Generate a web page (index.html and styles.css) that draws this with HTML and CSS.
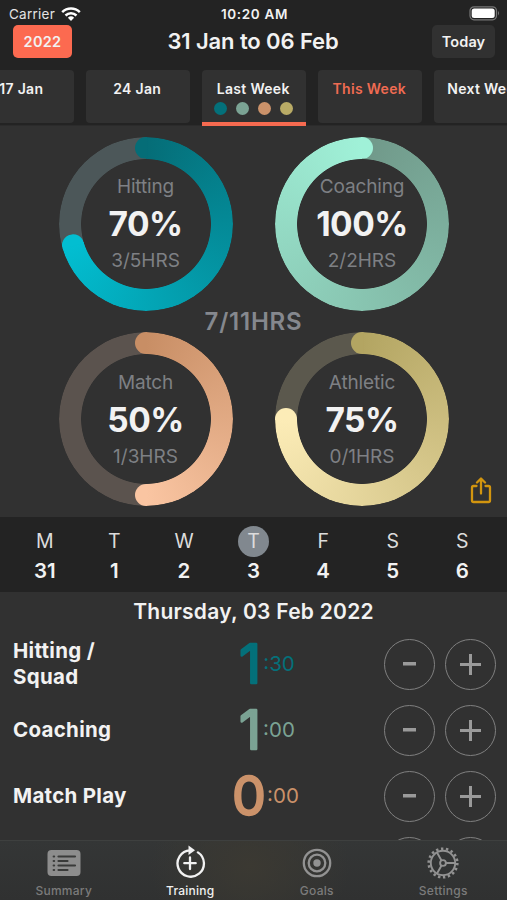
FILE: index.html
```html
<!DOCTYPE html>
<html lang="en">
<head>
<meta charset="utf-8">
<meta name="viewport" content="width=device-width, initial-scale=1">
<title>Training</title>
<link rel="stylesheet" href="styles.css">
</head>
<body>
<div class="app">
  <header class="top">
    <div class="status">
      <div class="carrier"><span>Carrier</span>
        <svg width="20" height="14" viewBox="0 0 20 14" fill="none" stroke="#fff" stroke-width="2.5"><path d="M1.2 5.2a12.6 12.6 0 0 1 17.6 0M4.5 8.5a8 8 0 0 1 11 0"/><path d="M10 14 6.9 10.7a4.5 4.5 0 0 1 6.2 0z" fill="#fff" stroke="none"/></svg>
      </div>
      <div class="clock">10:20 AM</div>
      <svg class="battery" width="31" height="15" viewBox="0 0 31 15"><rect x="1" y=".8" width="26.5" height="13" rx="4" fill="#222" stroke="#777" stroke-width="1.2"/><rect x="2.7" y="2.5" width="23" height="9.6" rx="2.5" fill="#fff"/><path d="M29 5q2 2.2 0 4.5z" fill="#777"/></svg>
    </div>
    <div class="title-row">
      <button class="btn year">2022</button>
      <h1>31 Jan to 06 Feb</h1>
      <button class="btn today">Today</button>
    </div>
    <nav class="weeks">
      <div class="week">17 Jan</div>
      <div class="week">24 Jan</div>
      <div class="week selected">Last Week
        <div class="dots"><i class="hitting"></i><i class="coaching"></i><i class="match"></i><i class="athletic"></i></div>
      </div>
      <div class="week current">This Week</div>
      <div class="week">Next Week</div>
    </nav>
  </header>

  <section class="rings">
    <div class="ring r-hitting"><div class="arc"></div><b class="cap start"></b><b class="cap end"></b>
      <div class="label">Hitting</div><div class="pct">70%</div><div class="hrs">3/5HRS</div></div>
    <div class="ring r-coaching"><div class="arc"></div><b class="cap end"></b>
      <div class="label">Coaching</div><div class="pct">100%</div><div class="hrs">2/2HRS</div></div>
    <div class="ring r-match"><div class="arc"></div><b class="cap start"></b><b class="cap end"></b>
      <div class="label">Match</div><div class="pct">50%</div><div class="hrs">1/3HRS</div></div>
    <div class="ring r-athletic"><div class="arc"></div><b class="cap start"></b><b class="cap end"></b>
      <div class="label">Athletic</div><div class="pct">75%</div><div class="hrs">0/1HRS</div></div>
    <div class="total">7/11HRS</div>
    <svg class="share" width="22" height="27" viewBox="0 0 22 27" fill="none" stroke="#d2950f" stroke-width="2.300" stroke-linecap="round" stroke-linejoin="round"><path d="M6.500 9H3.600Q2 9 2 10.600V23.400Q2 25 3.600 25H18.400Q20 25 20 23.400V10.600Q20 9 18.400 9H15.500M11 16.500V2M7 5.500 11 1.500 15 5.500"/></svg>
  </section>

  <section class="days">
    <div class="day"><span>M</span><strong>31</strong></div>
    <div class="day"><span>T</span><strong>1</strong></div>
    <div class="day"><span>W</span><strong>2</strong></div>
    <div class="day active"><span>T</span><strong>3</strong></div>
    <div class="day"><span>F</span><strong>4</strong></div>
    <div class="day"><span>S</span><strong>5</strong></div>
    <div class="day"><span>S</span><strong>6</strong></div>
  </section>

  <section class="log">
    <h2>Thursday, 03 Feb 2022</h2>
    <div class="row"><div class="name">Hitting /<br>Squad</div><div class="time t-hitting"><svg width="26" height="46" viewBox="0 0 26 46"><text x="13" y="41.500" text-anchor="middle">1</text></svg><small>:30</small></div>
      <button class="step minus"></button><button class="step plus"></button></div>
    <div class="row"><div class="name">Coaching</div><div class="time t-coaching"><svg width="26" height="46" viewBox="0 0 26 46"><text x="13" y="41.500" text-anchor="middle">1</text></svg><small>:00</small></div>
      <button class="step minus"></button><button class="step plus"></button></div>
    <div class="row"><div class="name">Match Play</div><div class="time t-match"><svg width="34" height="46" viewBox="0 0 34 46"><text x="16" y="41.500" text-anchor="middle">0</text></svg><small>:00</small></div>
      <button class="step minus"></button><button class="step plus"></button></div>
    <div class="row"><div class="name"></div><div class="time"></div>
      <button class="step minus"></button><button class="step plus"></button></div>
  </section>

  <nav class="tabbar">
    <a class="tab"><svg width="34" height="34" viewBox="0 0 34 34"><rect x=".5" y="5" width="33" height="26" rx="4" fill="#8d8d8d"/><g stroke="#3a3b3a" stroke-width="2.200" stroke-linecap="round"><path d="M11.500 11.500H28M11.500 16H20.500M11.500 20.500H28M11.500 25H20.500"/><path d="M6.700 11.500h.4M6.700 16h.4M6.700 20.500h.4M6.700 25h.4"/></g></svg><span>Summary</span></a>
    <a class="tab on"><svg width="34" height="34" viewBox="0 0 34 34" fill="none" stroke="#f2f2f2" stroke-width="2.300" stroke-linecap="round"><path d="M24.900 7.400A13.200 13.200 0 1 1 17 5.300M17 12.500V24M11.300 18.200H22.700"/><path d="M15.500 .5 22 5.200 15.500 9.900z" fill="#f2f2f2" stroke="none"/></svg><span>Training</span></a>
    <a class="tab"><svg width="34" height="34" viewBox="0 0 34 34" fill="none" stroke="#929292" stroke-width="2.300"><circle cx="17" cy="18" r="13.200"/><circle cx="17" cy="18" r="8.300"/><circle cx="17" cy="18" r="3.700" fill="#929292" stroke="none"/></svg><span>Goals</span></a>
    <a class="tab"><svg width="34" height="34" viewBox="0 0 34 34" fill="none" stroke="#929292" stroke-width="1.900"><circle cx="17" cy="18" r="14.300" stroke-width="2.600" stroke-dasharray="2.400 2.592"/><circle cx="17" cy="18" r="12.200"/><circle cx="17" cy="18" r="2.900"/><path d="M20 18H29M15.500 15.500 11 7.500M15.500 20.500 11 28.500"/></svg><span>Settings</span></a>
  </nav>
</div>
</body>
</html>
```
FILE: styles.css
```css
* { box-sizing: border-box; margin: 0; padding: 0; }
body { width: 507px; height: 900px; overflow: hidden; background: #313131; color: #f2f2f2; font-family: Inter, "Liberation Sans", sans-serif; }
button { border: 0; font-family: inherit; color: inherit; }
.app { height: 900px; display: flex; flex-direction: column; position: relative; overflow: hidden; }

.top { height: 126px; background: #232323; flex: none; border-bottom: 1px solid #2b2b2b; }
.status { height: 25px; display: grid; grid-template-columns: 1fr auto 1fr; align-items: center; padding: 3px 7px 0 9px; font-size: 13.5px; line-height: 22px; }
.carrier { display: flex; align-items: center; gap: 6px; letter-spacing: .25px; color: #e4e4e4; }
.clock { font-weight: 600; font-size: 13.500px; letter-spacing: .65px; }
.battery { justify-self: end; margin-top: -1px; }
.title-row { height: 45px; display: flex; justify-content: space-between; align-items: flex-start; padding: 0 12px 0 13px; }
h1 { font-size: 22px; font-weight: 600; line-height: 33px; letter-spacing: -.1px; margin-left: 2px; }
.btn { height: 33px; border-radius: 5px; font-size: 14.5px; font-weight: 600; }
.year { width: 59px; background: #fc6a50; letter-spacing: .3px; }
.today { width: 63px; background: #313131; letter-spacing: .1px; }
.weeks { display: flex; gap: 12px; margin-left: -30px; width: 568px; }
.week { flex: 0 0 104px; height: 53px; border-radius: 4px; background: #313131; text-align: center; font-size: 14px; font-weight: 600; line-height: 37px; letter-spacing: .3px; padding-right: 1.500px; }
.week.selected { height: 56px; border-bottom: 4px solid #f66a50; border-radius: 4px 4px 0 0; }
.week.current { color: #ef6b52; }
.dots { display: flex; justify-content: center; gap: 9px; margin-top: -5px; }
.dots i { width: 13px; height: 13px; border-radius: 50%; }
.hitting { background: #04707a; }
.coaching { background: #7ba394; }
.match { background: #cb926a; }
.athletic { background: #b9ab66; }

.rings { height: 391px; flex: none; position: relative; padding: 10.500px 0 0 58.500px; display: grid; grid-template-columns: 174px 174px; grid-template-rows: 174px 174px; gap: 21.500px 42.500px; }
.ring { position: relative; text-align: center; padding-top: 36.500px; }
.arc, .cap { position: absolute; inset: 0; }
.arc { border-radius: 50%; background: conic-gradient(var(--a) 0, var(--b) var(--p), var(--t) var(--p)); -webkit-mask: radial-gradient(circle, transparent 64.500px, #000 65.300px); mask: radial-gradient(circle, transparent 64.500px, #000 65.300px); }
.cap::before { content: ""; position: absolute; left: 76px; top: 0; width: 22px; height: 22px; border-radius: 50%; background: var(--a); }
.cap.start::before { clip-path: inset(0 43% 0 0); }
.cap.end { transform: rotate(var(--r)); }
.cap.end::before { background: var(--b); clip-path: inset(0 0 0 46%); }
.r-hitting { --a: #056d77; --b: #02bed1; --t: #4c5759; --p: 70.500%; --r: 253.800deg; }
.r-coaching { --a: #709889; --b: #a0f1d8; --t: #709889; --p: 100%; --r: 0deg; }
.r-match { --a: #c88e65; --b: #fac5a2; --t: #5b534e; --p: 50%; --r: 180deg; }
.r-athletic { --a: #b3a562; --b: #fcecb7; --t: #5b584d; --p: 75%; --r: 270deg; }
.label, .hrs { position: relative; font-size: 19px; line-height: 28px; color: #7e8084; }
.label { letter-spacing: -.15px; }
.pct { position: relative; font-size: 33.500px; line-height: 46px; font-weight: 650; letter-spacing: -.5px; }
.total { position: absolute; left: 0; right: 0; top: 182px; text-align: center; font-size: 24px; line-height: 28px; font-weight: 600; letter-spacing: .8px; color: #85888e; }
.share { position: absolute; left: 470px; top: 351px; }

.days { height: 75px; flex: none; background: #232323; display: grid; grid-template-columns: repeat(7, 69.600px); padding: 9px 0 0 10px; }
.day { display: flex; flex-direction: column; align-items: center; }
.day span { width: 31px; height: 31px; border-radius: 50%; text-align: center; font-size: 19.500px; line-height: 31px; color: #dcdcdc; }
.day.active span { background: #81888f; }
.day strong { font-size: 20.500px; font-weight: 600; line-height: 28px; }

.log { flex: 1; min-height: 0; overflow: hidden; }
h2 { text-align: center; font-size: 21px; font-weight: 600; line-height: 39px; letter-spacing: .25px; }
.row { height: 66px; display: grid; grid-template-columns: 160px 1fr 51px 51px; column-gap: 10px; align-items: center; padding: 0 11px 0 13px; }
.name { font-size: 20.500px; line-height: 26.500px; font-weight: 650; letter-spacing: .3px; }
.time { display: flex; align-items: center; justify-content: center; padding-right: 25px; }
.time svg { overflow: visible; }
.time text { font-family: Inter, sans-serif; font-size: 53px; font-weight: 400; fill: currentColor; stroke: currentColor; stroke-width: 2.500px; stroke-linejoin: round; }
.time small { font-size: 20.500px; line-height: 40px; }
.t-hitting { color: #04707a; }
.t-coaching { color: #7ba394; }
.t-match { color: #cb926a; }
.step { width: 51px; height: 51px; border: 1.500px solid #808080; border-radius: 50%; background: linear-gradient(#9a9a9a, #9a9a9a) center / 20px 3px no-repeat; }
.minus { background-size: 13px 3.500px; background-position: 50% 22px; }
.plus { background-image: linear-gradient(#9a9a9a, #9a9a9a), linear-gradient(#9a9a9a, #9a9a9a); background-size: 21px 3px, 3px 21px; background-position: center; background-repeat: no-repeat; }

.tabbar { position: absolute; left: 0; right: 0; bottom: 0; height: 60px; display: grid; grid-template-columns: repeat(4, 126.500px); border-top: 1px solid #3e403f; background: radial-gradient(ellipse 100px 80px at 250px 25px, #3b3932, transparent), linear-gradient(#343636, #303131); }
.tab { display: flex; flex-direction: column; align-items: center; padding-top: 4px; padding-left: 1px; font-size: 12px; line-height: 18px; letter-spacing: .25px; font-weight: 500; color: #7b7b7b; }
.tab span { margin-top: 3px; }
.tab.on { color: #f0f0f0; }
```
